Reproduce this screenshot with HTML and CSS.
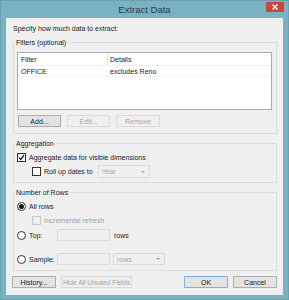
FILE: index.html
```html
<!DOCTYPE html>
<html>
<head>
<meta charset="utf-8">
<link rel="stylesheet" href="styles.css">
</head>
<body>
<div class="window">
  <div class="titlebar">
    <span class="title">Extract Data</span>
    <div class="close"><svg width="6" height="6" viewBox="0 0 6 6"><path d="M0.5 0.5 L5.5 5.5 M5.5 0.5 L0.5 5.5" stroke="#fff" stroke-width="1.4"/></svg></div>
  </div>
  <div class="client">
    <div class="intro">Specify how much data to extract:</div>

    <fieldset class="group">
      <legend>Filters (optional)</legend>
      <div class="filters-body">
        <div class="list">
          <div class="list-head"><div class="col1">Filter</div><div class="col2">Details</div></div>
          <div class="list-row"><div class="col1">OFFICE</div><div class="col2">excludes Reno</div></div>
        </div>
        <div class="btnrow">
          <div class="btn">Add...</div>
          <div class="btn disabled">Edit...</div>
          <div class="btn disabled wide">Remove</div>
        </div>
      </div>
    </fieldset>

    <fieldset class="group gap">
      <legend>Aggregation</legend>
      <div class="agg-body">
        <div class="row r1">
          <span class="check checked"><svg width="7" height="7" viewBox="0 0 7 7"><path d="M1 3.5 L2.8 5.5 L6 1" fill="none" stroke="#222" stroke-width="1.3"/></svg></span>
          <span class="label">Aggregate data for visible dimensions</span>
        </div>
        <div class="row r2 indent">
          <span class="check"></span>
          <span class="label">Roll up dates to</span>
          <div class="combo disabled year"><span>Year</span><span class="arrow"></span></div>
        </div>
      </div>
    </fieldset>

    <fieldset class="group gap">
      <legend>Number of Rows</legend>
      <div class="rows-body">
        <div class="row r1">
          <span class="radio on"></span>
          <span class="label">All rows</span>
        </div>
        <div class="row r2 indent">
          <span class="check disabled"></span>
          <span class="label dim">Incremental refresh</span>
        </div>
        <div class="row r3">
          <span class="radio"></span>
          <span class="label rlabel">Top:</span>
          <div class="textbox"></div>
          <span class="label after">rows</span>
        </div>
        <div class="row r4">
          <span class="radio"></span>
          <span class="label rlabel">Sample:</span>
          <div class="textbox"></div>
          <div class="combo disabled sample"><span>rows</span><span class="arrow"></span></div>
        </div>
      </div>
    </fieldset>

    <div class="bottom">
      <div class="btn history">History...</div>
      <div class="btn disabled hide">Hide All Unused Fields</div>
      <div class="spacer"></div>
      <div class="btn ok">OK</div>
      <div class="btn cancel">Cancel</div>
    </div>
  </div>
</div>
</body>
</html>
```
FILE: styles.css
```css
* { box-sizing: border-box; }
html, body { margin: 0; padding: 0; }
body {
  width: 289px;
  height: 300px;
  overflow: hidden;
  font-family: "Liberation Sans", Arial, sans-serif;
  font-size: 7px;
  color: #1a1a1a;
}
.window {
  width: 289px;
  height: 300px;
  background: #79b2c1;
  display: flex;
  flex-direction: column;
  border: 1px solid #6aa2b2;
}
.titlebar {
  height: 17px;
  position: relative;
  display: flex;
  align-items: center;
  justify-content: center;
}
.title {
  font-size: 9.5px;
  color: #24404b;
}
.close {
  position: absolute;
  right: 4px;
  top: 1px;
  width: 18px;
  height: 10px;
  background: #c8453d;
  display: flex;
  align-items: center;
  justify-content: center;
}
.client {
  flex: 1;
  margin: 0 5px 4px 5px;
  background: #f0f0f0;
  padding: 6px 6px 0 7px;
  display: flex;
  flex-direction: column;
}
.intro {
  line-height: 10px;
  height: 10px;
  margin-bottom: 4px;
}
.group {
  margin: 0;
  padding: 0;
  border: 1px solid #dcdcdc;
  min-width: 0;
}
.group.gap { margin-top: 5px; }
legend {
  padding: 0 2px;
  margin-left: 0;
  line-height: 9px;
  font-size: 7px;
}
.filters-body { padding: 5px 4px 6px 3px; }
.list {
  height: 58px;
  background: #fff;
  border: 1px solid #a9abb0;
}
.list-head, .list-row {
  display: flex;
  height: 13px;
  align-items: center;
  border-bottom: 1px solid #f0f0f0;
}
.list-row { height: 11px; border-bottom: 1px solid #f3f3f3; }
.col1 { width: 90px; padding-left: 3px; }
.list-head .col1 { border-right: 1px solid #e5e5e5; height: 100%; display: flex; align-items: center; }
.col2 { padding-left: 2px; }
.btnrow {
  display: flex;
  gap: 6px;
  margin-top: 5px;
  padding-left: 1px;
}
.btn {
  height: 12px;
  width: 43px;
  background: #e3e3e3;
  border: 1px solid #adadad;
  display: flex;
  align-items: center;
  justify-content: center;
  font-size: 7px;
  white-space: nowrap;
}
.btn.wide { width: 44px; }
.btn.disabled {
  background: #efefef;
  border-color: #dadada;
  color: #a6a6a6;
}
.agg-body { padding: 3px 4px 4px 3px; }
.rows-body { padding: 3px 4px 5px 3px; }
.row {
  display: flex;
  align-items: center;
  height: 12px;
}
.agg-body .r2 { margin-top: 2px; height: 13px; }
.rows-body .r2 { margin-top: 2px; }
.rows-body .r3 { margin-top: 3px; }
.rows-body .r4 { margin-top: 12px; }
.indent { padding-left: 15px; }
.check {
  width: 9px;
  height: 9px;
  border: 1px solid #333;
  background: #fff;
  display: flex;
  align-items: center;
  justify-content: center;
  flex: none;
}
.check.disabled { border-color: #c8c8c8; background: #f0f0f0; }
.label { margin-left: 3px; white-space: nowrap; }
.label.dim { color: #a0a0a0; }
.radio {
  width: 9px;
  height: 9px;
  border-radius: 50%;
  border: 1px solid #333;
  background: #fff;
  flex: none;
  display: flex;
  align-items: center;
  justify-content: center;
}
.radio.on::after {
  content: "";
  width: 5px;
  height: 5px;
  border-radius: 50%;
  background: #1a1a1a;
}
.rlabel { width: 28px; }
.textbox {
  width: 53px;
  height: 12px;
  border: 1px solid #dadada;
  background: #f0f0f0;
}
.after { margin-left: 4px; }
.combo {
  height: 13px;
  border: 1px solid #dadada;
  background: #f0f0f0;
  display: flex;
  align-items: center;
  justify-content: space-between;
  padding: 0 4px 0 3px;
  color: #a6a6a6;
}
.combo.year { width: 52px; margin-left: 5px; }
.combo.sample { width: 52px; height: 12px; margin-left: 3px; }
.arrow {
  width: 0;
  height: 0;
  border-left: 2.5px solid transparent;
  border-right: 2.5px solid transparent;
  border-top: 2.5px solid #a6a6a6;
}
.bottom {
  display: flex;
  margin-top: 5px;
  gap: 5px;
}
.btn.history { width: 44px; margin-left: -1px; }
.btn.hide { width: 71px; letter-spacing: -0.15px; }
.spacer { flex: 1; }
.btn.ok { width: 44px; border-color: #7fb4e6; }
.btn.cancel { width: 44px; }
```
